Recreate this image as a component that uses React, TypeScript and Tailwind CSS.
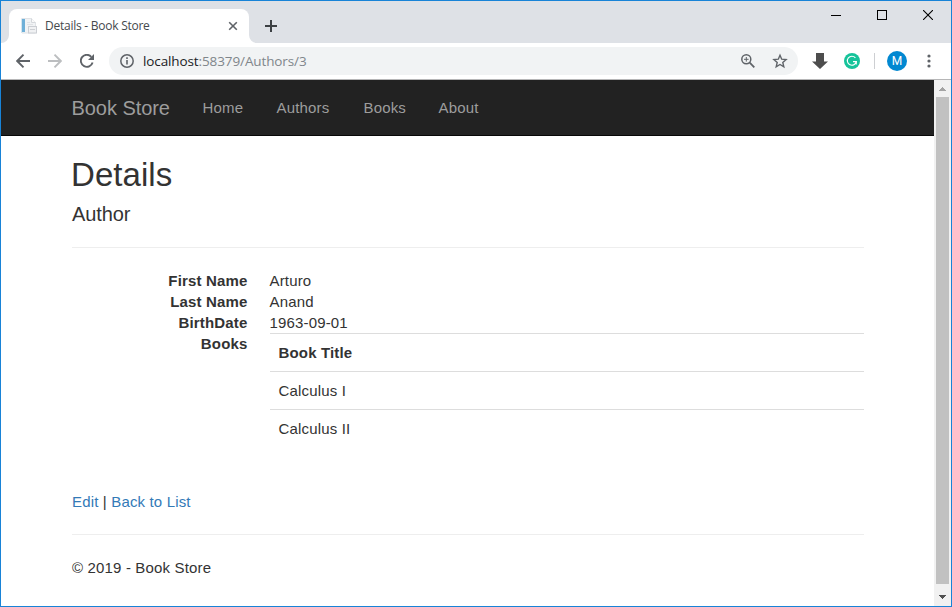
import React from "react";

function Favicon() {
  return (
    <svg width="16" height="16" viewBox="0 0 16 16" className="shrink-0">
      <path d="M1 0.500h9.500l4 4V15H1z" fill="#f1f3f5" stroke="#e0e3e7" strokeWidth="1" />
      <path d="M10.500 0.500v4h4" fill="#fafafa" stroke="#d5d8dc" strokeWidth="1" />
      <rect x="1" y="1" width="3" height="13" fill="#6fb0d8" />
      <rect x="0" y="0.500" width="1" height="14.500" fill="#d5e6f0" />
      <path d="M6 4.500h3M6 6.500h6" stroke="#e0e2e5" />
      <rect x="7.500" y="8.500" width="8" height="6.500" fill="#f0f1f3" stroke="#cbced3" />
      <path d="M9 11.500h5" stroke="#cdd0d4" />
    </svg>
  );
}

function TabStrip() {
  return (
    <div className="flex h-[42px] items-start bg-[#dee1e6]">
      <div className="flex h-[42px] items-end">
        <svg width="8" height="8" viewBox="0 0 8 8">
          <path d="M8 0v8H0a8 8 0 0 0 8-8z" fill="#fff" />
        </svg>
      </div>
      <div className="mt-2 flex h-[34px] w-[240px] items-center rounded-t-[8px] bg-white pl-3 pr-[11px]">
        <Favicon />
        <span className="ml-2 whitespace-nowrap font-['Open_Sans',sans-serif] text-[12px] leading-4 tracking-[-0.25px] text-[#45494d]">
          Details - Book Store
        </span>
        <svg width="10" height="10" viewBox="0 0 10 10" className="ml-auto">
          <path d="M1.200 1.200l7.600 7.600M8.800 1.200l-7.600 7.600" stroke="#5f6368" strokeWidth="1.600" />
        </svg>
      </div>
      <div className="flex h-[42px] items-end">
        <svg width="8" height="8" viewBox="0 0 8 8">
          <path d="M0 0v8h8a8 8 0 0 1-8-8z" fill="#fff" />
        </svg>
      </div>
      <svg width="12" height="12" viewBox="0 0 12 12" className="ml-2 mt-[19px]">
        <path d="M6 0v12M0 6h12" stroke="#3c4043" strokeWidth="2" />
      </svg>
      <div className="ml-auto mr-[18px] mt-[9px] flex gap-9">
        <svg width="10" height="10" viewBox="0 0 10 10">
          <path d="M0 5.500h10" stroke="#000" />
        </svg>
        <svg width="10" height="10" viewBox="0 0 10 10">
          <rect x="0.500" y="0.500" width="9" height="9" fill="none" stroke="#000" />
        </svg>
        <svg width="10" height="10" viewBox="0 0 10 10">
          <path d="M0 0l10 10M10 0L0 10" stroke="#000" strokeWidth="1.100" />
        </svg>
      </div>
    </div>
  );
}

function Toolbar() {
  return (
    <div className="flex h-[37px] items-center border-b border-[#b6b6b7] bg-white">
      <svg width="14" height="14" viewBox="0 0 14 14" className="ml-[15px]">
        <path d="M14 7H1.500M7.500 0.700L1.200 7l6.300 6.300" fill="none" stroke="#5f6368" strokeWidth="1.900" />
      </svg>
      <svg width="14" height="14" viewBox="0 0 14 14" className="ml-[18px]">
        <path d="M0 7h12.500M6.500 0.700L12.800 7l-6.300 6.300" fill="none" stroke="#bcbec0" strokeWidth="1.900" />
      </svg>
      <svg width="14" height="14" viewBox="0 0 14 14" className="ml-[18px]">
        <path d="M12.600 8.500A6 6 0 1 1 11.300 2.800" fill="none" stroke="#5f6368" strokeWidth="1.900" />
        <path d="M14 0v6H8z" fill="#5f6368" />
      </svg>
      <div className="ml-[15px] flex h-7 w-[689px] items-center rounded-full bg-[#f1f3f4] pl-[11px] pr-[10px]">
        <svg width="14" height="14" viewBox="0 0 14 14">
          <circle cx="7" cy="7" r="6.200" fill="none" stroke="#5f6368" strokeWidth="1.500" />
          <path d="M7 6v4.500M7 3.300v1.600" stroke="#5f6368" strokeWidth="1.600" />
        </svg>
        <span className="ml-[9px] whitespace-nowrap font-['Open_Sans',sans-serif] text-[13.5px] leading-5 tracking-[-0.11px] text-[#80868b]">
          <span className="text-[#202124]">localhost</span>:58379/Authors/3
        </span>
        <svg width="14" height="14" viewBox="0 0 14 14" className="ml-auto">
          <circle cx="5.300" cy="5.300" r="4.500" fill="none" stroke="#5f6368" strokeWidth="1.500" />
          <path d="M8.700 8.700l4.600 4.600" stroke="#5f6368" strokeWidth="1.800" />
          <path d="M5.300 3v4.600M3 5.300h4.600" stroke="#5f6368" strokeWidth="1" />
        </svg>
        <svg width="16" height="16" viewBox="0 0 16 16" className="ml-[17px]">
          <path
            d="M8 2.200l1.700 4 4.400.4-3.300 2.900 1 4.300L8 11.500l-3.800 2.300 1-4.300L1.900 6.600l4.400-.4z"
            fill="none"
            stroke="#5f6368"
            strokeWidth="1.400"
          />
        </svg>
      </div>
      <svg width="16" height="16" viewBox="0 0 16 16" className="ml-[14px]">
        <path d="M4 0h8v8.500h4L8 16 0 8.500h4z" fill="#4d4d4d" />
      </svg>
      <svg width="16" height="16" viewBox="0 0 16 16" className="ml-4">
        <circle cx="8" cy="8" r="8" fill="#15c39a" />
        <path d="M11.400 4.900A4.500 4.500 0 1 0 12.300 8.600H9" fill="none" stroke="#fff" strokeWidth="1.100" />
        <path d="M12.300 8.100v3.400" stroke="#fff" strokeWidth="1" />
      </svg>
      <div className="ml-[14px] h-4 w-px bg-[#cdcfd2]" />
      <div className="ml-3 flex size-5 items-center justify-center rounded-full bg-[#0288d1] font-['Roboto',sans-serif] text-[12px] font-normal leading-none text-white">
        M
      </div>
      <svg width="4" height="14" viewBox="0 0 4 14" className="ml-[20px]">
        <circle cx="2" cy="2" r="1.600" fill="#5f6368" />
        <circle cx="2" cy="7" r="1.600" fill="#5f6368" />
        <circle cx="2" cy="12" r="1.600" fill="#5f6368" />
      </svg>
    </div>
  );
}

function Navbar() {
  return (
    <nav className="flex h-14 items-center border-b border-[#080808] bg-[#222] pl-[70.5px] text-[#9d9d9d]">
      <a className="w-[131px] text-[20px] leading-5 tracking-[-0.05px]">Book Store</a>
      <a className="w-[74px]">Home</a>
      <a className="w-[87px]">Authors</a>
      <a className="w-[75px]">Books</a>
      <a>About</a>
    </nav>
  );
}

const details = [
  ["First Name", "Arturo"],
  ["Last Name", "Anand"],
  ["BirthDate", "1963-09-01"],
];

const books = ["Calculus I", "Calculus II"];

function Details() {
  return (
    <main className="pl-[71px] pr-[70px]">
      <h2 className="-ml-px mt-[21px] text-[33px] leading-9 tracking-[0.05px]">Details</h2>
      <h4 className="mt-[10px] text-[20px] leading-[22px] tracking-[-0.1px]">Author</h4>
      <hr className="mt-[22px] border-[#eee]" />
      <dl className="mt-[22px] grid grid-cols-[175.500px_1fr] gap-x-[22px]">
        {details.map(([label, value]) => (
          <React.Fragment key={label}>
            <dt className="text-right font-bold">{label}</dt>
            <dd>{value}</dd>
          </React.Fragment>
        ))}
        <dt className="text-right font-bold">Books</dt>
        <dd>
          <div className="flex h-[38px] items-center border-t border-[#ddd] pl-[9px] font-bold">Book Title</div>
          {books.map((title) => (
            <div key={title} className="flex h-[38px] items-center border-t border-[#ddd] pl-[9px]">
              {title}
            </div>
          ))}
        </dd>
      </dl>
      <p className="mt-[44px]">
        <a className="text-[#337ab7]">Edit</a> | <a className="text-[#337ab7]">Back to List</a>
      </p>
      <hr className="mt-[22px] border-[#eee]" />
      <footer className="mt-[22px]">© 2019 - Book Store</footer>
    </main>
  );
}

function Scrollbar() {
  return (
    <div className="flex w-[17px] shrink-0 flex-col items-center bg-[#f1f1f1]">
      <svg width="17" height="17" viewBox="0 0 17 17" shapeRendering="crispEdges">
        <path d="M5 11h7v-1h-1v-1h-1v-1h-1v-1h-1v1h-1v1h-1v1h-1z" fill="#a3a3a3" />
      </svg>
      <div className="w-[13px] flex-1 bg-[#c1c1c1]" />
      <svg width="17" height="22" viewBox="0 0 17 22" shapeRendering="crispEdges">
        <path d="M5 11h7v1h-1v1h-1v1h-1v1h-1v-1h-1v-1h-1v-1h-1z" fill="#505050" />
      </svg>
    </div>
  );
}

export default function App() {
  return (
    <div className="flex h-[607px] w-[952px] flex-col overflow-hidden border border-[#1883d7] bg-white">
      <TabStrip />
      <Toolbar />
      <div className="flex min-h-0 flex-1">
        <div className="min-w-0 flex-1 font-['Liberation_Sans',Arial,sans-serif] text-[15px] leading-[21px] tracking-[0.16px] text-[#333]">
          <Navbar />
          <Details />
        </div>
        <Scrollbar />
      </div>
    </div>
  );
}
